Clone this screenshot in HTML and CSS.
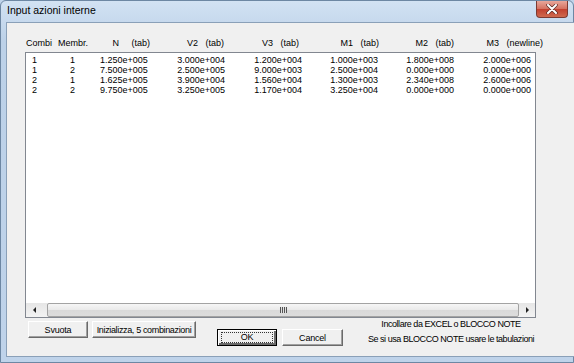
FILE: index.html
```html
<!DOCTYPE html>
<html lang="it">
<head>
    <meta charset="UTF-8">
    <title>Input azioni interne</title>
    <link rel="stylesheet" href="styles.css">
</head>
<body>
    <div class="window">
        <div class="titlebar">
            <span class="title">Input azioni interne</span>
            <div class="close-btn">
                <svg width="14" height="10" viewBox="0 0 14 10">
                    <path d="M3 1 L11 9 M11 1 L3 9" stroke="#5a2a25" stroke-width="3.4" stroke-linecap="round"/>
                    <path d="M3 1 L11 9 M11 1 L3 9" stroke="#ffffff" stroke-width="2" stroke-linecap="round"/>
                </svg>
            </div>
        </div>

        <div class="frame">
            <div class="client">
                <div class="content">
                    <!-- Column headers -->
                    <div class="cols head">
                        <span class="c1">Combi</span>
                        <span>Membr.</span>
                        <span class="r">N     (tab)</span>
                        <span class="r">V2   (tab)</span>
                        <span class="r">V3   (tab)</span>
                        <span class="r">M1   (tab)</span>
                        <span class="r">M2   (tab)</span>
                        <span class="r">M3   (newline)</span>
                    </div>

                    <div class="listbox">
                        <div class="rows" id="rows"></div>
                        <div class="hscroll">
                            <div class="arrow"><span class="tri tri-left"></span></div>
                            <div class="track">
                                <div class="thumb"><span class="grip"></span></div>
                            </div>
                            <div class="arrow"><span class="tri tri-right"></span></div>
                        </div>
                    </div>

                    <div class="actions">
                        <button class="btn btn-svuota">Svuota</button>
                        <button class="btn btn-init">Inizializza, 5 combinazioni</button>
                        <button class="btn btn-ok"><span class="focus">OK</span></button>
                        <button class="btn btn-cancel">Cancel</button>
                        <div class="hint">
                            <div>Incollare da EXCEL o BLOCCO NOTE</div>
                            <div>Se si usa BLOCCO NOTE usare le tabulazioni</div>
                        </div>
                    </div>
                </div>

                <div class="vscroll">
                    <div class="varrow"><span class="tri tri-up"></span></div>
                    <div class="vthumb"></div>
                    <div class="vtrack"></div>
                    <div class="varrow"><span class="tri tri-down"></span></div>
                </div>
            </div>
        </div>
    </div>

    <script>
        // Righe della tabella azioni
        const data = [
            ["1", "1", "1.250e+005", "3.000e+004", "1.200e+004", "1.000e+003", "1.800e+008", "2.000e+006"],
            ["1", "2", "7.500e+005", "2.500e+005", "9.000e+003", "2.500e+004", "0.000e+000", "0.000e+000"],
            ["2", "1", "1.625e+005", "3.900e+004", "1.560e+004", "1.300e+003", "2.340e+008", "2.600e+006"],
            ["2", "2", "9.750e+005", "3.250e+005", "1.170e+004", "3.250e+004", "0.000e+000", "0.000e+000"]
        ];

        const rows = document.getElementById("rows");
        data.forEach(function (row) {
            const line = document.createElement("div");
            line.className = "cols row";
            row.forEach(function (value, i) {
                const cell = document.createElement("span");
                cell.textContent = value;
                if (i > 1) cell.className = "r";
                line.appendChild(cell);
            });
            rows.appendChild(line);
        });
    </script>
</body>
</html>
```

FILE: styles.css
```css
/* General Styles */
body {
    margin: 0;
    background-color: #bfd3ea;
    font-family: "Liberation Sans", Arial, sans-serif;
}

.window {
    width: 574px;
    height: 363px;
    box-sizing: border-box;
    border: 1px solid #6d87a3;
    border-radius: 6px 6px 0 0;
    background: linear-gradient(#d2e2f3, #bcd1e8 40px, #bfd3ea);
    display: flex;
    flex-direction: column;
}

/* Title bar */
.titlebar {
    height: 21px;
    display: flex;
    align-items: flex-start;
    justify-content: space-between;
    padding-left: 6px;
    padding-right: 5px;
}

.title {
    font-size: 10.5px;
    line-height: 19px;
    color: #000;
}

.close-btn {
    width: 32px;
    height: 17px;
    box-sizing: border-box;
    border: 1px solid #7c3a32;
    border-top: none;
    border-radius: 0 0 4px 4px;
    background: linear-gradient(#e8a79b, #d4705f 50%, #c2402f 51%, #cf6a4f);
    display: flex;
    align-items: center;
    justify-content: center;
}

/* Frame and client area */
.frame {
    flex: 1;
    display: flex;
    padding: 0 3px 5px 5px;
}

.client {
    flex: 1;
    display: flex;
    border: 1px solid #8aa0b8;
    background-color: #f0f0f0;
}

.content {
    flex: 1;
    padding: 15px 0 0 18px;
    font-size: 9px;
}

/* Table columns */
.cols {
    display: grid;
    white-space: pre;
    line-height: 10px;
}

.head {
    grid-template-columns: 33px 42px 50px 74px 75px 80px 75px 89px;
    height: 10px;
    margin-bottom: 4px;
    width: 560px;
}

.head .c1 {
    padding-left: 1px;
}

.row {
    grid-template-columns: 34px 40px 47px 78px 77px 76px 76px 77px;
}

.row span:first-child {
    padding-left: 6px;
}

.row span:nth-child(2) {
    padding-left: 10px;
}

.r {
    text-align: right;
}

.listbox {
    width: 511px;
    height: 266px;
    box-sizing: border-box;
    border: 1px solid #828790;
    background: white;
    display: flex;
    flex-direction: column;
}

.rows {
    flex: 1;
    padding-top: 2px;
    overflow: hidden;
}

/* Scrollbars */
.hscroll {
    height: 14px;
    display: flex;
    background: linear-gradient(#e6e6e6, #f3f3f3);
}

.arrow {
    width: 17px;
    display: flex;
    align-items: center;
    justify-content: center;
}

.arrow:last-child {
    width: 16px;
}

.track {
    flex: 1;
    display: flex;
    padding-left: 4px;
}

.thumb {
    flex: 1;
    box-sizing: border-box;
    border: 1px solid #a3a3a3;
    border-radius: 2px;
    background: linear-gradient(#f6f6f6, #e9e9e9 50%, #d9d9d9 51%, #dcdcdc);
    display: flex;
    align-items: center;
    justify-content: center;
}

.grip {
    width: 7px;
    height: 6px;
    background: repeating-linear-gradient(90deg, #555 0 1px, #e0e0e0 1px 2px);
}

.tri {
    width: 0;
    height: 0;
    border: 3px solid transparent;
}

.tri-left {
    border-right: 3px solid #222;
    border-left: none;
}

.tri-right {
    border-left: 3px solid #222;
    border-right: none;
}

.tri-up {
    border-bottom: 3px solid #222;
    border-top: none;
}

.tri-down {
    border-top: 3px solid #222;
    border-bottom: none;
}

.vscroll {
    width: 15px;
    display: flex;
    flex-direction: column;
    background: linear-gradient(90deg, #e6e6e6, #f3f3f3);
}

.varrow {
    height: 14px;
    display: flex;
    align-items: center;
    justify-content: center;
}

.vthumb {
    height: 14px;
    box-sizing: border-box;
    border: 1px solid #a3a3a3;
    border-radius: 2px;
    background: linear-gradient(90deg, #f6f6f6, #e9e9e9 50%, #d9d9d9 51%, #dcdcdc);
}

.vtrack {
    flex: 1;
}

/* Buttons */
.actions {
    display: flex;
    align-items: flex-start;
    margin-top: 3px;
    padding-left: 3px;
}

.btn {
    height: 17px;
    padding: 0;
    font-family: inherit;
    font-size: 9px;
    letter-spacing: -0.2px;
    white-space: nowrap;
    color: #000;
    background-color: #f0f0f0;
    border: 1px solid;
    border-color: #ffffff #6a6a6a #6a6a6a #ffffff;
    box-shadow: inset -1px -1px 0 #a0a0a0;
}

.btn-svuota {
    width: 60px;
}

.btn-init {
    width: 104px;
    margin-left: 4px;
    letter-spacing: -0.35px;
}

.btn-ok {
    width: 60px;
    margin-left: 21px;
    margin-top: 8px;
    border: 1px solid #000;
    box-shadow: inset 1px 1px 0 #fff, inset -2px -2px 0 #6a6a6a;
    display: flex;
    align-items: center;
    justify-content: center;
}

.focus {
    display: block;
    width: 50px;
    height: 9px;
    line-height: 9px;
    border: 1px dotted #333;
}

.btn-cancel {
    width: 61px;
    margin-left: 5px;
    margin-top: 8px;
}

.hint {
    width: 190px;
    margin-left: 13px;
    margin-top: -4px;
    text-align: center;
    white-space: nowrap;
    line-height: 15px;
    font-size: 9px;
    letter-spacing: -0.45px;
}
```
